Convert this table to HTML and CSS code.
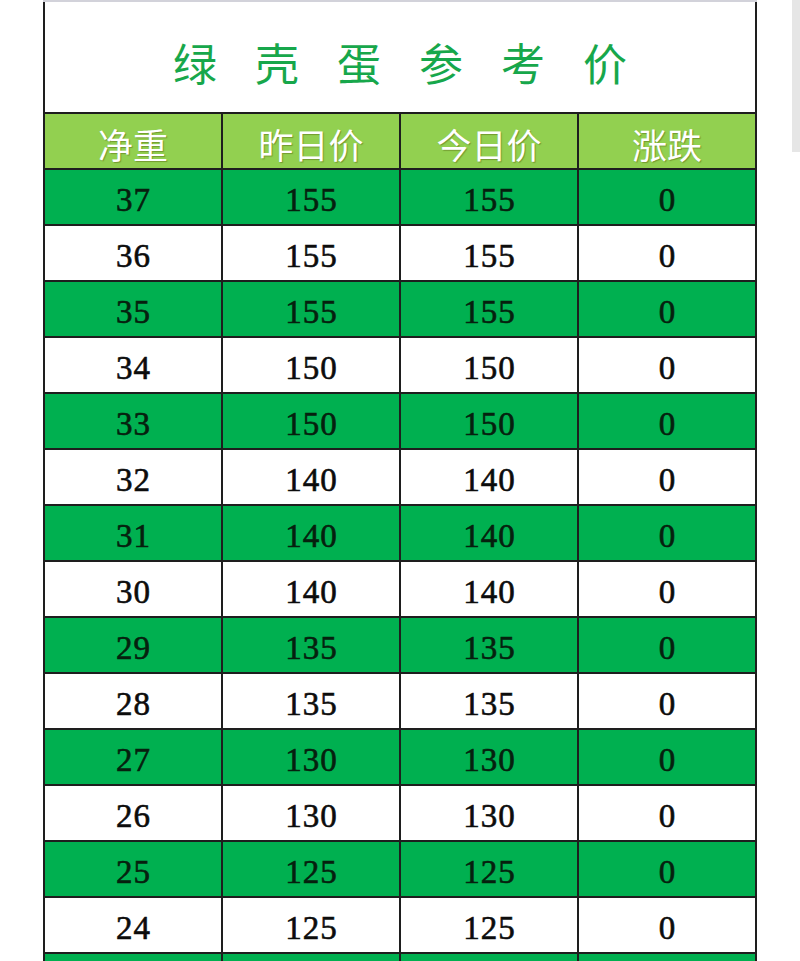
FILE: index.html
```html
<!DOCTYPE html>
<html lang="zh-CN">
<head>
<meta charset="utf-8">
<title>绿壳蛋参考价</title>
<link rel="stylesheet" href="styles.css">
</head>
<body>
<div class="page">
  <div class="sheet">
    <div class="title">绿壳蛋参考价</div>
    <div class="grid">
      <div class="cell head">净重</div><div class="cell head">昨日价</div><div class="cell head">今日价</div><div class="cell head">涨跌</div>
      <div class="cell g">37</div><div class="cell g">155</div><div class="cell g">155</div><div class="cell g">0</div>
      <div class="cell">36</div><div class="cell">155</div><div class="cell">155</div><div class="cell">0</div>
      <div class="cell g">35</div><div class="cell g">155</div><div class="cell g">155</div><div class="cell g">0</div>
      <div class="cell">34</div><div class="cell">150</div><div class="cell">150</div><div class="cell">0</div>
      <div class="cell g">33</div><div class="cell g">150</div><div class="cell g">150</div><div class="cell g">0</div>
      <div class="cell">32</div><div class="cell">140</div><div class="cell">140</div><div class="cell">0</div>
      <div class="cell g">31</div><div class="cell g">140</div><div class="cell g">140</div><div class="cell g">0</div>
      <div class="cell">30</div><div class="cell">140</div><div class="cell">140</div><div class="cell">0</div>
      <div class="cell g">29</div><div class="cell g">135</div><div class="cell g">135</div><div class="cell g">0</div>
      <div class="cell">28</div><div class="cell">135</div><div class="cell">135</div><div class="cell">0</div>
      <div class="cell g">27</div><div class="cell g">130</div><div class="cell g">130</div><div class="cell g">0</div>
      <div class="cell">26</div><div class="cell">130</div><div class="cell">130</div><div class="cell">0</div>
      <div class="cell g">25</div><div class="cell g">125</div><div class="cell g">125</div><div class="cell g">0</div>
      <div class="cell">24</div><div class="cell">125</div><div class="cell">125</div><div class="cell">0</div>
      <div class="cell g"></div><div class="cell g"></div><div class="cell g"></div><div class="cell g"></div>
    </div>
  </div>
  <div class="scroll"></div>
</div>
</body>
</html>
```
FILE: styles.css
```css
html, body {
  margin: 0;
  padding: 0;
  background: #ffffff;
  height: 961px;
  overflow: hidden;
}

.page {
  display: flex;
  align-items: flex-start;
}

.sheet {
  margin-left: 43px;
  width: 714px;
  border-top: 2px solid #d2d2da;
}

.title {
  box-sizing: border-box;
  height: 112px;
  border-left: 2px solid #1e1e1e;
  border-right: 2px solid #1e1e1e;
  border-bottom: 2px solid #1e1e1e;
  display: flex;
  align-items: center;
  justify-content: center;
  padding-top: 10px;
  padding-left: 38px;
  font-family: "Noto Sans CJK SC", sans-serif;
  font-size: 44px;
  letter-spacing: 38px;
  color: #17a74b;
  font-weight: 400;
}

.grid {
  display: grid;
  grid-template-columns: repeat(4, 178px);
  border-left: 2px solid #1e1e1e;
}

.cell {
  box-sizing: border-box;
  height: 56px;
  border-right: 2px solid #1e1e1e;
  border-bottom: 2px solid #1e1e1e;
  display: flex;
  align-items: center;
  justify-content: center;
  padding-top: 7px;
  padding-left: 1px;
  font-family: "Liberation Serif", "Noto Sans CJK SC", serif;
  font-size: 33px;
  font-weight: 400;
  letter-spacing: 1px;
  -webkit-text-stroke: 0.6px currentColor;
  color: #0c0c0c;
  background: #ffffff;
}

.cell.g {
  background: #00b050;
  color: #06200e;
}

.cell.head {
  background: #92d050;
  color: #ffffff;
  font-family: "Noto Sans CJK SC", sans-serif;
  font-weight: 400;
  font-size: 35px;
  letter-spacing: 0;
  padding-left: 0;
  padding-top: 4px;
  -webkit-text-stroke: 0;
  text-shadow: 1px 1px 1px rgba(90, 110, 20, 0.55);
}

.scroll {
  margin-left: auto;
  width: 8px;
  height: 152px;
  background: #e6e6e6;
}
```
